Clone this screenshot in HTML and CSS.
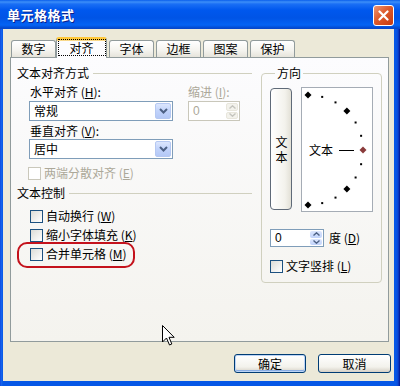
FILE: index.html
```html
<!DOCTYPE html>
<html lang="zh-CN">
<head>
    <meta charset="UTF-8">
    <meta name="viewport" content="width=device-width, initial-scale=1.0">
    <title>单元格格式</title>
    <link rel="stylesheet" href="styles.css">
</head>
<body>

    <div class="window">
        <div class="titlebar">
            <span class="title">单元格格式</span>
            <span class="close-btn">
                <svg width="11" height="11" viewBox="0 0 11 11"><path d="M1.5 1.5 L9.5 9.5 M9.5 1.5 L1.5 9.5" stroke="#fff" stroke-width="2.2" stroke-linecap="round"/></svg>
            </span>
        </div>

        <div class="client">
            <div class="tabs">
                <div class="tab">数字</div>
                <div class="tab active"><span class="focus">对齐</span></div>
                <div class="tab">字体</div>
                <div class="tab">边框</div>
                <div class="tab">图案</div>
                <div class="tab">保护</div>
            </div>

            <div class="panel">
                <div class="left-col">
                    <div class="group-head"><span>文本对齐方式</span></div>

                    <div class="field-row">
                        <div class="field">
                            <div class="label">水平对齐 (<u>H</u>):</div>
                            <div class="select">
                                <span class="value">常规</span>
                                <span class="drop"><svg width="9" height="6" viewBox="0 0 9 6"><path d="M1 1 L4.5 4.5 L8 1" fill="none" stroke="#4D6185" stroke-width="2"/></svg></span>
                            </div>
                        </div>
                        <div class="field indent">
                            <div class="label disabled">缩进 (<u>I</u>):</div>
                            <div class="spin is-disabled">
                                <span class="value">0</span>
                                <span class="spin-btns">
                                    <span class="spin-btn"><svg width="7" height="4" viewBox="0 0 7 4"><path d="M0.5 3.5 L3.5 0.8 L6.5 3.5" fill="none" stroke="#C5C5BE" stroke-width="1.4"/></svg></span>
                                    <span class="spin-btn"><svg width="7" height="4" viewBox="0 0 7 4"><path d="M0.5 0.5 L3.5 3.2 L6.5 0.5" fill="none" stroke="#C5C5BE" stroke-width="1.4"/></svg></span>
                                </span>
                            </div>
                        </div>
                    </div>

                    <div class="field field-v">
                        <div class="label">垂直对齐 (<u>V</u>):</div>
                        <div class="select select-v">
                            <span class="value">居中</span>
                            <span class="drop"><svg width="9" height="6" viewBox="0 0 9 6"><path d="M1 1 L4.5 4.5 L8 1" fill="none" stroke="#4D6185" stroke-width="2"/></svg></span>
                        </div>
                    </div>

                    <div class="check check-justify disabled"><span class="box"></span>两端分散对齐 (<u>E</u>)</div>

                    <div class="group-head group-head-2"><span>文本控制</span></div>

                    <div class="check check-first"><span class="box"></span>自动换行 (<u>W</u>)</div>
                    <div class="check"><span class="box"></span>缩小字体填充 (<u>K</u>)</div>
                    <div class="check"><span class="box"></span>合并单元格 (<u>M</u>)</div>
                </div>

                <fieldset class="orient">
                    <legend>方向</legend>
                    <div class="orient-row">
                        <div class="vtext"><span class="vtext-label">文本</span></div>
                        <div class="dial">
                            <svg width="70" height="123" viewBox="1 1 70 123">
                                <g fill="#000">
                                    <path d="M7 4.5 L10.5 8 L7 11.5 L3.5 8 Z"/>
                                    <path d="M45.9 20.6 L49.4 24.1 L45.9 27.6 L42.4 24.1 Z"/>
                                    <path d="M45.9 98.4 L49.4 101.9 L45.9 105.4 L42.4 101.9 Z"/>
                                    <path d="M7 114.5 L10.5 118 L7 121.5 L3.5 118 Z"/>
                                    <rect x="20.2" y="8.9" width="2" height="2"/>
                                    <rect x="33.5" y="14.4" width="2" height="2"/>
                                    <rect x="53.6" y="34.5" width="2" height="2"/>
                                    <rect x="59.1" y="47.8" width="2" height="2"/>
                                    <rect x="59.1" y="76.2" width="2" height="2"/>
                                    <rect x="53.6" y="89.5" width="2" height="2"/>
                                    <rect x="33.5" y="109.6" width="2" height="2"/>
                                    <rect x="20.2" y="115.1" width="2" height="2"/>
                                </g>
                                <path d="M62 59.5 L65.5 63 L62 66.5 L58.5 63 Z" fill="#8A3B3B"/>
                                <text x="8" y="67.5" class="dial-text">文本</text>
                                <line x1="38" y1="63.5" x2="53" y2="63.5" stroke="#000" stroke-width="1"/>
                            </svg>
                        </div>
                    </div>
                    <div class="degree-row">
                        <div class="spin degree">
                            <span class="value">0</span>
                            <span class="spin-btns">
                                <span class="spin-btn"><svg width="7" height="4" viewBox="0 0 7 4"><path d="M0.5 3.5 L3.5 0.8 L6.5 3.5" fill="none" stroke="#4D6185" stroke-width="1.4"/></svg></span>
                                <span class="spin-btn"><svg width="7" height="4" viewBox="0 0 7 4"><path d="M0.5 0.5 L3.5 3.2 L6.5 0.5" fill="none" stroke="#4D6185" stroke-width="1.4"/></svg></span>
                            </span>
                        </div>
                        <span class="degree-label">度 (<u>D</u>)</span>
                    </div>
                    <div class="check check-vertical"><span class="box"></span>文字竖排 (<u>L</u>)</div>
                </fieldset>
            </div>

            <div class="buttons">
                <div class="btn default">确定</div>
                <div class="btn">取消</div>
            </div>
        </div>

        <!-- red annotation ring and mouse pointer drawn over the dialog -->
        <div class="highlight"></div>
        <svg class="cursor" width="13" height="21" viewBox="0 0 13 21">
            <path d="M0.5 0.5 V17 L4.5 13 L7.5 20 L9.8 19 L7 12.3 H12.2 Z" fill="#fff" stroke="#000" stroke-width="1" stroke-linejoin="miter"/>
        </svg>
    </div>

</body>
</html>
```

FILE: styles.css
```css
/* Global reset */
* {
    margin: 0;
    padding: 0;
    box-sizing: border-box;
}

body {
    width: 400px;
    height: 386px;
    overflow: hidden;
    font-family: "Liberation Sans", "Noto Sans CJK SC", sans-serif;
    font-size: 12px;
    line-height: 14px;
    color: #000;
}

u {
    text-decoration: underline;
}

.window {
    position: relative;
    width: 400px;
    height: 386px;
    display: flex;
    flex-direction: column;
    background: linear-gradient(to right, #0B3ED8 0, #1766EE 1px, #0657E6 3px, #0657E6 396px, #0A45D2 398px, #00138C 400px);
}

/* Title bar */
.titlebar {
    flex: none;
    height: 29px;
    display: flex;
    align-items: center;
    justify-content: space-between;
    padding: 1px 6px 0 7px;
    background: linear-gradient(#0A5EEC 0, #3D8FF8 2px, #1A6FF5 4px, #0058EE 10px, #0054E6 18px, #0463F4 25px, #0349CF 28px, #0A46C8 29px);
}

.title {
    color: #fff;
    font-family: "Noto Sans CJK SC", sans-serif;
    font-weight: bold;
    font-size: 13px;
    letter-spacing: 0.5px;
    text-shadow: 1px 1px 0 #0B1F8C;
}

.close-btn {
    width: 21px;
    height: 21px;
    display: flex;
    align-items: center;
    justify-content: center;
    border: 1px solid #fff;
    border-radius: 3px;
    background: linear-gradient(135deg, #EE9673 0%, #DD5A2C 45%, #C63A10 100%);
}

/* Client area */
.client {
    flex: 1;
    margin: 0 6px 5px 3px;
    padding-top: 8px;
    background: #ECE9D8;
    display: flex;
    flex-direction: column;
}

.tabs {
    display: flex;
    align-items: flex-end;
    height: 20px;
    margin-left: 8px;
    font-family: "Noto Sans CJK SC", sans-serif;
}

.tab {
    width: 45px;
    height: 17px;
    margin-right: 2px;
    display: flex;
    align-items: center;
    justify-content: center;
    border: 1px solid #919B9C;
    border-bottom: none;
    border-radius: 3px 3px 0 0;
    background: linear-gradient(#FFFFFF, #F4F3EE 60%, #E6E4DB);
}

    .tab.active {
        position: relative;
        z-index: 1;
        width: 51px;
        height: 21px;
        margin-left: -2px;
        margin-bottom: -1px;
        padding-bottom: 3px;
        border-top: 3px solid #FFC83C;
        box-shadow: inset 0 1px 0 #F9D98B;
        background: #FCFCFE;
    }

.focus {
    width: 46px;
    height: 15px;
    display: flex;
    align-items: center;
    justify-content: center;
    outline: 1px dotted #000;
}

.panel {
    height: 285px;
    margin: 0 5px 0 7px;
    padding: 8px 6px 0 6px;
    border: 1px solid #919B9C;
    background: linear-gradient(#FCFCFE, #F4F3EE);
    display: flex;
    gap: 9px;
    font-family: "Noto Sans CJK SC", sans-serif;
}

.left-col {
    width: 235px;
    display: flex;
    flex-direction: column;
}

.group-head {
    display: flex;
    align-items: center;
    height: 14px;
}

    .group-head::after {
        content: "";
        flex: 1;
        height: 1px;
        margin-left: 4px;
        background: #D0D0BF;
    }

.group-head-2 {
    margin-top: 6px;
}

.field-row {
    display: flex;
    margin-top: 5px;
}

.field {
    width: 144px;
    margin-left: 12px;
}

    .field.indent {
        width: 53px;
        margin-left: 14px;
    }

.field-v {
    margin-top: 3px;
}

.label {
    height: 14px;
    padding-left: 1px;
}

.disabled {
    color: #ACA899;
}

.select {
    height: 20px;
    margin-top: 2px;
    padding: 1px 1px 1px 4px;
    display: flex;
    align-items: center;
    justify-content: space-between;
    border: 1px solid #7F9DB9;
    background: #fff;
}

.select-v {
    margin-top: 1px;
}

.drop {
    width: 16px;
    height: 16px;
    display: flex;
    align-items: center;
    justify-content: center;
    border: 1px solid #B5C8F2;
    border-radius: 2px;
    background: linear-gradient(#DCE6FD, #C1D3FB 50%, #B4C8F6);
}

.spin {
    height: 20px;
    margin-top: 2px;
    margin-left: 1px;
    padding: 1px 1px 1px 4px;
    display: flex;
    align-items: center;
    justify-content: space-between;
    border: 1px solid #7F9DB9;
    background: #fff;
    font-family: "Liberation Sans", sans-serif;
}

    .spin.is-disabled {
        width: 52px;
        border-color: #C9C7BA;
        color: #ACA899;
    }

.spin-btns {
    width: 12px;
    height: 100%;
    display: flex;
    flex-direction: column;
    gap: 1px;
}

.spin-btn {
    flex: 1;
    display: flex;
    align-items: center;
    justify-content: center;
    border-radius: 2px;
    background: linear-gradient(#DCE6FD, #C1D3FB);
}

.is-disabled .spin-btn {
    background: #F3F2EC;
    border: 1px solid #E8E6DC;
}

.check {
    display: flex;
    align-items: center;
    height: 14px;
    margin-top: 5px;
    margin-left: 13px;
}

.box {
    width: 13px;
    height: 13px;
    margin-right: 3px;
    border: 1px solid #1C5180;
    background: linear-gradient(135deg, #DCDCD7, #FFFFFF);
}

.check.disabled .box {
    border-color: #CAC8BB;
    background: #fff;
}

.check-justify {
    margin-top: 7px;
    margin-left: 11px;
}

.check-first {
    margin-top: 9px;
}

/* Orientation group */
.orient {
    width: 121px;
    height: 217px;
    padding: 7px 8px 0 8px;
    border: 1px solid #D0D0BF;
    border-radius: 4px;
}

    .orient legend {
        margin-left: 5px;
        padding: 0 2px;
        height: 14px;
    }

.orient-row {
    display: flex;
    align-items: flex-start;
    gap: 9px;
}

.vtext {
    width: 22px;
    height: 122px;
    margin-top: 1px;
    display: flex;
    align-items: center;
    justify-content: center;
    border: 1px solid #5F6A78;
    border-radius: 4px;
    background: linear-gradient(to right, #FFFFFF, #F3F2EC 70%, #E2E0D6);
}

.vtext-label {
    writing-mode: vertical-rl;
    letter-spacing: 3px;
    padding-top: 3px;
    line-height: 14px;
}

.dial {
    width: 72px;
    height: 125px;
    border: 1px solid #A5ACB5;
    background: #fff;
}

.dial-text {
    font-family: "Noto Sans CJK SC", sans-serif;
    font-size: 12px;
}

.degree-row {
    display: flex;
    align-items: center;
    margin-top: 17px;
}

.degree {
    width: 54px;
    height: 18px;
    margin: 0;
}

.degree-label {
    margin-left: 5px;
}

.check-vertical {
    margin-top: 12px;
    margin-left: 0;
}

/* Bottom buttons */
.buttons {
    display: flex;
    justify-content: flex-end;
    gap: 12px;
    margin-top: 12px;
    padding-right: 3px;
    font-family: "Noto Sans CJK SC", sans-serif;
}

.btn {
    width: 73px;
    height: 19px;
    display: flex;
    align-items: center;
    justify-content: center;
    border: 1px solid #003C74;
    border-radius: 3px;
    background: linear-gradient(#FFFFFF, #F3F2EC 70%, #D6D0C5);
}

    .btn.default {
        width: 72px;
        box-shadow: inset 0 0 0 1px #BCD4F6, inset 0 -1px 0 1px #89ADE4;
    }

/* Overlays */
.highlight {
    position: absolute;
    left: 17px;
    top: 242px;
    width: 118px;
    height: 26px;
    border: 2px solid #C4121C;
    border-radius: 10px;
}

.cursor {
    position: absolute;
    left: 162px;
    top: 325px;
}
```
